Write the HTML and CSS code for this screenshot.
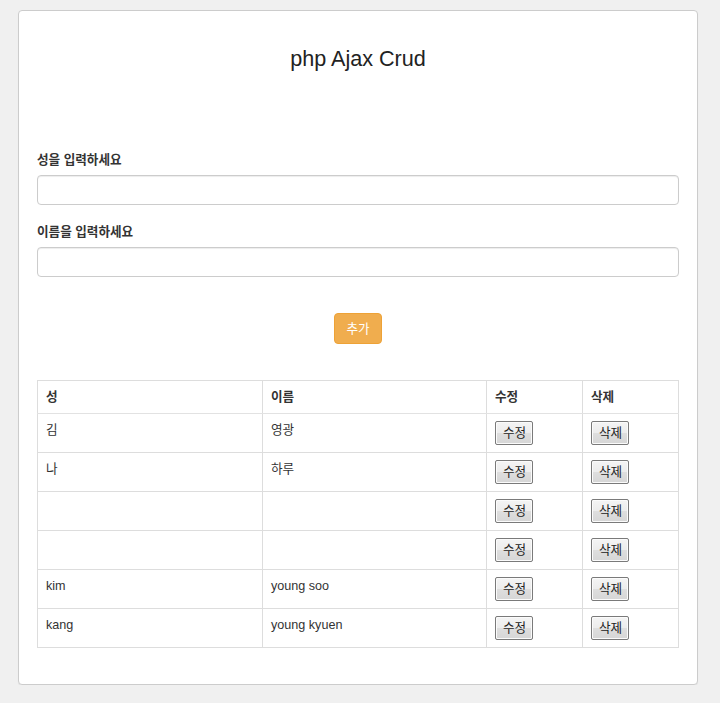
FILE: index.html
```html
<!DOCTYPE html>
<html lang="ko">
  <head>
    <meta charset="UTF-8" />
    <meta name="viewport" content="width=device-width, initial-scale=1.0" />
    <title>php Ajax Crud</title>
    <link rel="stylesheet" href="styles.css">
  </head>
  <body>
    <div class="panel">
      <h3 class="title">php Ajax Crud</h3>

      <form class="form" onsubmit="return false;">
        <div class="field">
          <label for="firstName">성을 입력하세요</label>
          <input type="text" id="firstName" class="input" />
        </div>
        <div class="field">
          <label for="lastName">이름을 입력하세요</label>
          <input type="text" id="lastName" class="input" />
        </div>
        <div class="actions">
          <button type="button" class="btn-add">추가</button>
        </div>
      </form>

      <table class="table">
        <colgroup>
          <col class="col-first" />
          <col class="col-name" />
          <col class="col-btn" />
          <col />
        </colgroup>
        <thead>
          <tr>
            <th>성</th>
            <th>이름</th>
            <th>수정</th>
            <th>삭제</th>
          </tr>
        </thead>
        <tbody>
          <tr>
            <td>김</td>
            <td>영광</td>
            <td><button class="btn-row">수정</button></td>
            <td><button class="btn-row">삭제</button></td>
          </tr>
          <tr>
            <td>나</td>
            <td>하루</td>
            <td><button class="btn-row">수정</button></td>
            <td><button class="btn-row">삭제</button></td>
          </tr>
          <tr>
            <td></td>
            <td></td>
            <td><button class="btn-row">수정</button></td>
            <td><button class="btn-row">삭제</button></td>
          </tr>
          <tr>
            <td></td>
            <td></td>
            <td><button class="btn-row">수정</button></td>
            <td><button class="btn-row">삭제</button></td>
          </tr>
          <tr>
            <td>kim</td>
            <td>young soo</td>
            <td><button class="btn-row">수정</button></td>
            <td><button class="btn-row">삭제</button></td>
          </tr>
          <tr>
            <td>kang</td>
            <td>young kyuen</td>
            <td><button class="btn-row">수정</button></td>
            <td><button class="btn-row">삭제</button></td>
          </tr>
        </tbody>
      </table>
    </div>
  </body>
</html>
```

FILE: styles.css
```css
body {
  margin: 0;
  background-color: #f0f0f0;
  font-family: "Liberation Sans", "Noto Sans CJK KR", sans-serif;
  font-size: 12.6px;
  line-height: 18px;
  color: #333;
}

.panel {
  margin: 10px 22px 0 18px;
  padding: 0 18px 36px;
  background-color: #fff;
  border: 1px solid #ccc;
  border-radius: 4px;
  box-shadow: 0 1px 1px rgba(0, 0, 0, 0.05);
}

.title {
  margin: 36px 0 0;
  font-size: 21.6px;
  font-weight: normal;
  line-height: 24px;
  text-align: center;
  color: #222;
}

.form {
  margin-top: 80px;
}

.field {
  margin-bottom: 18px;
}

.field label {
  display: block;
  margin-bottom: 6px;
  font-weight: bold;
}

.input {
  display: block;
  box-sizing: border-box;
  width: 100%;
  height: 30px;
  padding: 5px 11px;
  font: inherit;
  background-color: #fff;
  border: 1px solid #ccc;
  border-radius: 4px;
  box-shadow: inset 0 1px 1px rgba(0, 0, 0, 0.075);
}

/* orange add button */
.actions {
  margin-top: 36px;
  text-align: center;
}

.btn-add {
  height: 31px;
  padding: 0 11.5px;
  font: inherit;
  color: #fff;
  background-color: #f0ad4e;
  border: 1px solid #eea236;
  border-radius: 4px;
  cursor: pointer;
}

.table {
  width: 100%;
  margin-top: 36px;
  table-layout: fixed;
  border-collapse: collapse;
}

.col-first {
  width: 225px;
}

.col-name {
  width: 224px;
}

.col-btn {
  width: 96px;
}

.table th,
.table td {
  padding: 7px 7px 7px 8px;
  border: 1px solid #ddd;
  text-align: left;
  vertical-align: top;
}

.table th {
  padding-bottom: 7px;
  border-bottom-color: #e2e2e2;
  font-weight: bold;
}

/* old style grey row buttons */
.btn-row {
  display: block;
  height: 24px;
  padding: 0 6px 0 7px;
  font: inherit;
  color: #222;
  background: linear-gradient(#f4f4f4, #ececec 50%, #dedede 51%, #d6d6d6);
  border: 1px solid #7a7a7a;
  border-radius: 2px;
  box-shadow: inset 0 0 0 1px #fbfbfb;
  cursor: pointer;
}
```
